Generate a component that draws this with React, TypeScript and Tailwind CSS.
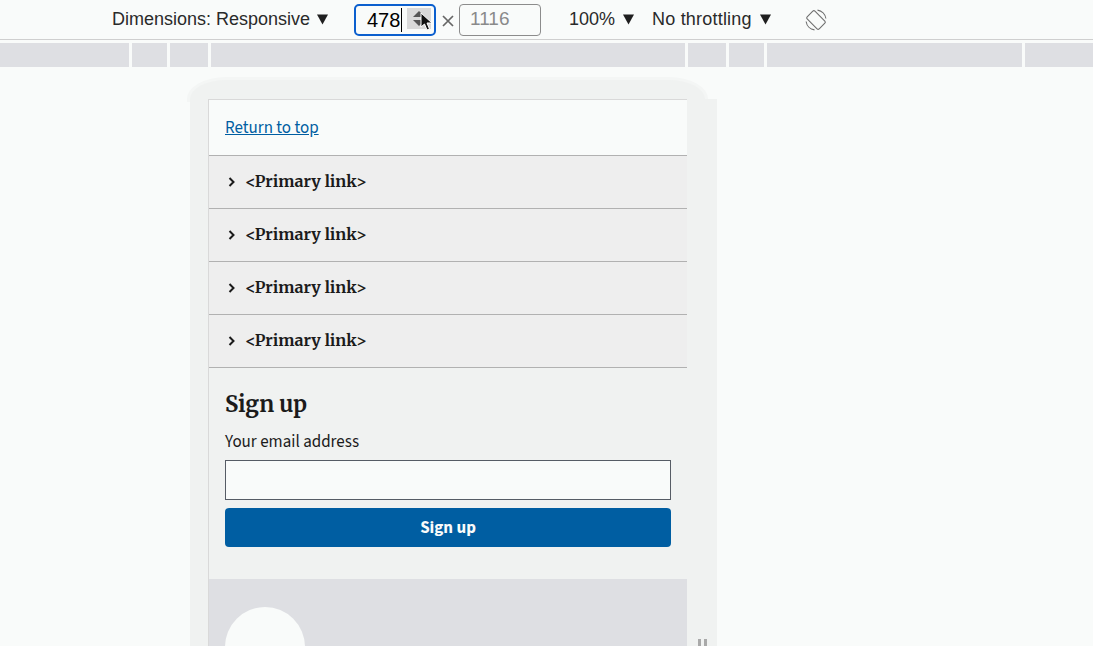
const serif = "font-['Merriweather','DejaVu_Serif','Liberation_Serif',serif]"
const sans = "font-['Source_Sans_3','Source_Sans_Pro','Noto_Sans',sans-serif]"
const rulerWidths = [129, 35, 38, 474, 38, 35, 255, 68]

const Caret = () => (
  <svg width="13" height="11" viewBox="0 0 13 11" className="shrink-0">
    <path d="M1 0.500h11L6.500 10.500z" fill="#1f1f1f" />
  </svg>
)

const RotateIcon = () => (
  <svg width="24" height="24" viewBox="0 0 24 24" fill="none" stroke="#6f6f6f" strokeWidth="1.100">
    <rect x="6.500" y="3.500" width="11" height="17" rx="1.500" transform="rotate(-45 12 12)" />
    <path d="M13.500 2.100a10 10 0 0 1 8.400 8.400M10.500 21.900a10 10 0 0 1-8.400-8.400" />
  </svg>
)

const Toolbar = () => (
  <div className="flex h-[40px] items-center border-b border-[#cfcfcf] pl-[112px] font-['Liberation_Sans',sans-serif] text-[#2a2a2a]">
    <span className="w-[198px] text-[18px] whitespace-nowrap">Dimensions: Responsive</span>
    <span className="ml-[6px]"><Caret /></span>
    <div className="relative ml-[25px] flex h-[32px] w-[82px] items-center rounded-[5px] border-[2.5px] border-[#0b5fce] bg-[#f9fbfa]">
      <span className="ml-[11px] border-r border-black pr-px text-[20px] leading-[24px] text-black">478</span>
      <div className="absolute top-[2px] right-[3px] flex h-[21px] w-[24px] flex-col items-center justify-center gap-[3px] bg-[#d9d9d9]">
        <svg width="12" height="6" viewBox="0 0 12 6"><path d="M6 0l6 6H0z" fill="#555" /></svg>
        <svg width="12" height="6" viewBox="0 0 12 6"><path d="M6 6l6-6H0z" fill="#555" /></svg>
      </div>
      <svg width="14" height="20" viewBox="0 0 14 20" className="absolute top-[6px] left-[64px]">
        <path d="M1 1v14l3.500-3 2.500 6 2.500-1-2.500-6h5z" fill="#111" stroke="#fff" strokeWidth="1" />
      </svg>
    </div>
    <svg width="12" height="12" viewBox="0 0 12 12" className="mt-[3px] ml-[6px]" stroke="#666" strokeWidth="1.700">
      <path d="M1 1l10 10M11 1L1 11" />
    </svg>
    <div className="ml-[5px] flex h-[32px] w-[82px] items-center rounded-[4px] border border-[#8c8c8c] pl-[10px] text-[19px] text-[#8a8a8a]">
      1116
    </div>
    <span className="ml-[28px] text-[18px] whitespace-nowrap">100%</span>
    <span className="ml-[7px]"><Caret /></span>
    <span className="ml-[17px] text-[18px] tracking-[0.2px] whitespace-nowrap">No throttling</span>
    <span className="ml-[7px]"><Caret /></span>
    <span className="ml-[32px]"><RotateIcon /></span>
  </div>
)

const PrimaryLink = () => (
  <div className="flex h-[53px] items-center gap-[8px] border-b border-[#b1b1b1] bg-[#eeeeee] pb-[2px] pl-[18px]">
    <svg width="10" height="12" viewBox="0 0 10 12" fill="none" stroke="#1b1b1b" strokeWidth="2" className="mt-[2px]">
      <path d="M2.500 2l4 4-4 4" />
    </svg>
    <span className={`${serif} text-[16.100px] font-bold text-[#1b1b1b]`}>{'<Primary link>'}</span>
  </div>
)

const SignUp = () => (
  <div className={`${sans} h-[211px] bg-[#f0f2f1] px-[16px] pt-[20px]`}>
    <h2 className={`${serif} text-[22px] leading-[32px] font-bold text-[#1b1b1b]`}>Sign up</h2>
    <p className="mt-[11px] text-[17px] leading-[22px] text-[#1b1b1b]">Your email address</p>
    <div className="mt-[7px] h-[40px] border border-[#565c65] bg-[#f9fbfa]" />
    <button className="mt-[8px] h-[39px] w-full rounded-[4px] bg-[#005ea2] pt-[2px] text-[17px] font-bold text-[#f9fbfa]">
      Sign up
    </button>
  </div>
)

const DeviceFrame = () => (
  <div className="mt-[13px] ml-[190px] w-[527px]">
    <div className="h-[19px] w-[515px] rounded-tl-[36px_19px] rounded-tr-[36px_19px] bg-[#f0f2f1] shadow-[0_0_0_3px_#f4f6f5]" />
    <div className="flex bg-[#f0f2f1]">
      <div className="w-[18px] shrink-0" />
      <div className="w-[479px] shrink-0 border-t border-l border-[#d9d9d9]">
        <div className={`${sans} flex h-[56px] items-center border-b border-[#b1b1b1] bg-[#f9fbfa] pt-[2px] pl-[16px] text-[17px]`}>
          <a className="text-[#005ea2] underline">Return to top</a>
        </div>
        <PrimaryLink />
        <PrimaryLink />
        <PrimaryLink />
        <PrimaryLink />
        <SignUp />
        <div className="h-[200px] bg-[#dedfe3] pt-[28px] pl-[16px]">
          <div className="h-[80px] w-[80px] rounded-full bg-[#f9fbfa]" />
        </div>
      </div>
      <div className="flex flex-1 justify-center gap-[3px] pt-[540px]">
        <div className="h-[10px] w-[3px] bg-[#a9a9a9]" />
        <div className="h-[10px] w-[3px] bg-[#a9a9a9]" />
      </div>
    </div>
  </div>
)

export default function App() {
  return (
    <div className="h-[646px] w-[1093px] overflow-hidden bg-[#f9fbfa]">
      <Toolbar />
      <div className="mt-[3px] flex h-[24px] gap-[3px]">
        {rulerWidths.map((w, idx) => (
          <div key={idx} className="shrink-0 bg-[#dedfe3]" style={{ width: w }} />
        ))}
      </div>
      <DeviceFrame />
    </div>
  )
}
